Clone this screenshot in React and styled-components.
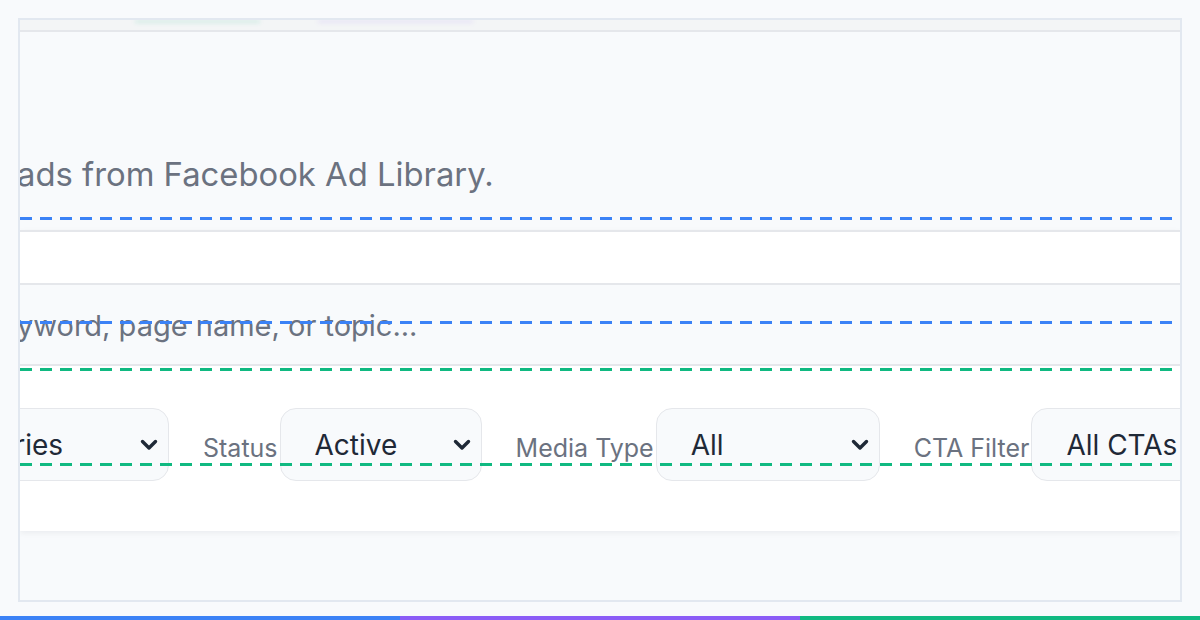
import styled, { createGlobalStyle } from 'styled-components'

const GlobalStyle = createGlobalStyle`
  html, body {
    margin: 0;
    padding: 0;
    background: #f8fafc;
    overflow: hidden;
  }
  * {
    box-sizing: border-box;
  }
`

const Page = styled.div`
  height: 620px;
  display: flex;
  flex-direction: column;
  padding-top: 18px;
  font-family: Inter, 'Noto Sans', 'Liberation Sans', sans-serif;
`

const Frame = styled.div`
  position: relative;
  margin-left: 18px;
  width: 1164px;
  height: 584px;
  border: 2px solid #e2e8f0;
  background: #f8fafc;
  display: flex;
  flex-direction: column;
  overflow: hidden;
`

const TopStrip = styled.div`
  height: 12px;
  flex: none;
  background: #f3f5f6;
  border-bottom: 2px solid #e5e7eb;
  display: flex;
  gap: 58px;
  padding-left: 115px;
`

const Glow = styled.div`
  width: ${(props) => props.width}px;
  height: 3px;
  background: ${(props) => props.color};
  filter: blur(2px);
`

const Header = styled.header`
  height: 198px;
  flex: none;
  padding-top: 123px;
`

const Description = styled.p`
  margin: 0 0 0 -3px;
  font-size: 32.8px;
  line-height: 1.2;
  color: #6b7280;
  white-space: nowrap;
`

const Panel = styled.section`
  flex: none;
  background: #ffffff;
  border-top: 2px solid #e5e7eb;
  padding-top: 51px;
  box-shadow: 0 2px 6px rgba(15, 23, 42, 0.06);
`

const SearchInput = styled.input`
  display: block;
  width: calc(100% + 6px);
  margin-left: -3px;
  height: 83px;
  border: none;
  border-top: 2px solid #e5e7eb;
  border-bottom: 2px solid #e5e7eb;
  background: #f8fafc;
  padding: 2px 0 0;
  font-family: inherit;
  font-size: 29px;
  color: #1f2937;
  outline: none;

  &::placeholder {
    color: #6b7280;
  }
`

const FilterRow = styled.div`
  display: flex;
  align-items: center;
  gap: 34px;
  padding: 42px 0 50px;
  white-space: nowrap;
`

const FilterGroup = styled.div`
  display: flex;
  align-items: center;
  gap: 2px;
  flex: none;
  margin-left: ${(props) => props.offset || 0}px;
`

const Label = styled.span`
  font-size: 25px;
  color: #6b7280;
  padding-top: 7px;
`

const SelectBox = styled.div`
  width: ${(props) => props.width}px;
  height: 73px;
  display: flex;
  align-items: center;
  justify-content: space-between;
  padding: 0 10px 0 34px;
  background: #f8fafc;
  border: 1px solid #e5e7eb;
  border-radius: 16px;
  font-size: 28px;
  color: #1f2937;
  flex: none;
`

const Chevron = styled.svg`
  flex: none;
  width: 18px;
  height: 12px;
`

const Rest = styled.div`
  flex: 1;
`

const DashLine = styled.div`
  position: absolute;
  left: 0;
  right: 0;
  top: ${(props) => props.top}px;
  height: 3px;
  background: repeating-linear-gradient(
    to right,
    ${(props) => props.color} 0 12px,
    transparent 12px 20px
  );
  pointer-events: none;
`

const Spacer = styled.div`
  flex: 1;
`

const ColorBar = styled.div`
  height: 4px;
  display: flex;
`

const BarPart = styled.div`
  flex: 1;
  background: ${(props) => props.color};
`

const Select = ({ value, width }) => (
  <SelectBox width={width}>
    <span>{value}</span>
    <Chevron viewBox="0 0 18 12">
      <polyline
        points="2.5,2.5 9,9 15.5,2.5"
        fill="none"
        stroke="#1f2937"
        strokeWidth="3.4"
        strokeLinecap="round"
        strokeLinejoin="round"
      />
    </Chevron>
  </SelectBox>
)

const filters = [
  { label: 'Status', value: 'Active', width: 202 },
  { label: 'Media Type', value: 'All', width: 224 },
  { label: 'CTA Filter', value: 'All CTAs', width: 230 },
]

const App = () => (
  <>
    <GlobalStyle />
    <Page>
      <Frame>
        <TopStrip>
          <Glow width={125} color="rgba(16, 185, 129, 0.14)" />
          <Glow width={155} color="rgba(139, 92, 246, 0.12)" />
        </TopStrip>
        <Header>
          <Description>ads from Facebook Ad Library.</Description>
        </Header>
        <Panel>
          <SearchInput placeholder="yword, page name, or topic..." />
          <FilterRow>
            <FilterGroup offset={-161}>
              <Select value="All Countries" width={310} />
            </FilterGroup>
            {filters.map((f) => (
              <FilterGroup key={f.label}>
                <Label>{f.label}</Label>
                <Select value={f.value} width={f.width} />
              </FilterGroup>
            ))}
          </FilterRow>
        </Panel>
        <Rest />
        <DashLine top={197} color="#3b82f6" />
        <DashLine top={301} color="#3b82f6" />
        <DashLine top={348} color="#10b981" />
        <DashLine top={443} color="#10b981" />
      </Frame>
      <Spacer />
      <ColorBar>
        <BarPart color="#3b82f6" />
        <BarPart color="#8b5cf6" />
        <BarPart color="#10b981" />
      </ColorBar>
    </Page>
  </>
)

export default App
